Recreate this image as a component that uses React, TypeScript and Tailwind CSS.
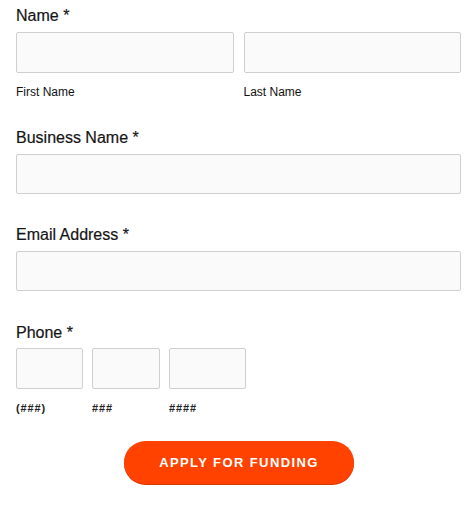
import React from 'react';

const inputCls =
  'block w-full rounded-[2px] border border-[#cfcfcf] bg-[#fafafa] outline-none';

function Label({ children, className = '' }: { children: React.ReactNode; className?: string }) {
  return (
    <label className={`block text-[16px] leading-[20px] text-[#151515] [-webkit-text-stroke:0.2px_#151515] ${className}`}>
      {children} <span>*</span>
    </label>
  );
}

const phoneHint = 'mt-[12px] text-[11px] font-bold leading-[14px] tracking-[0.9px] text-[#222]';

export default function App() {
  return (
    <div
      className="min-h-[522px] w-full bg-white pl-4 pr-[6px] pt-[6px]"
      style={{ fontFamily: '"Liberation Sans", Arial, sans-serif' }}
    >
      <form onSubmit={(e) => e.preventDefault()}>
        {/* Name */}
        <Label>Name</Label>
        <div className="mt-[6px] grid grid-cols-2 gap-[10px]">
          <div>
            <input className={`${inputCls} h-[41px]`} />
            <div className="mt-[11px] text-[12px] leading-[16px] text-[#111]">First Name</div>
          </div>
          <div>
            <input className={`${inputCls} h-[41px]`} />
            <div className="mt-[11px] text-[12px] leading-[16px] text-[#111]">Last Name</div>
          </div>
        </div>

        {/* Business */}
        <Label className="mt-[28px]">Business Name</Label>
        <input className={`${inputCls} mt-[6px] h-[40px]`} />

        {/* Email */}
        <Label className="mt-[31px]">Email Address</Label>
        <input className={`${inputCls} mt-[6px] h-[40px]`} />

        {/* Phone */}
        <Label className="mt-[32px]">Phone</Label>
        <div className="mt-[5px] flex gap-[9px]">
          <div className="w-[67px]">
            <input className={`${inputCls} h-[41px]`} />
            <div className={phoneHint}>(###)</div>
          </div>
          <div className="w-[68px]">
            <input className={`${inputCls} h-[41px]`} />
            <div className={phoneHint}>###</div>
          </div>
          <div className="w-[77px]">
            <input className={`${inputCls} h-[41px]`} />
            <div className={phoneHint}>####</div>
          </div>
        </div>

        <div className="mt-[26px] flex justify-center">
          <button
            type="submit"
            className="h-[43px] w-[230px] rounded-full bg-[#ff4200] pl-[1px] text-[13px] font-bold tracking-[1.4px] text-white shadow-[0_1px_0_#d93800]"
          >
            APPLY FOR FUNDING
          </button>
        </div>
      </form>
    </div>
  );
}
